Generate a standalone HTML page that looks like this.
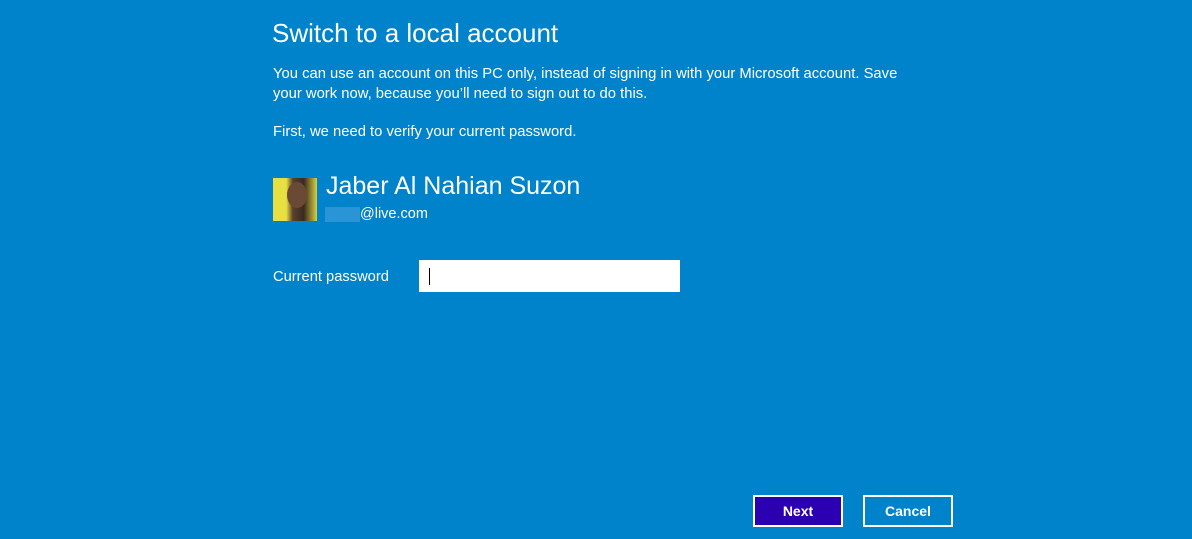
<!DOCTYPE html><html><head><style>
body{margin:0;width:1192px;height:539px;background:#0083ca;font-family:"Liberation Sans",sans-serif;color:#fff;position:relative;overflow:hidden}
.a{position:absolute;white-space:nowrap}
.btn{position:absolute;top:495px;width:86px;height:28px;border:2px solid #fff;font-weight:bold;font-size:14px;line-height:28px;text-align:center}
</style></head><body>
<div class="a" style="left:272px;top:18px;font-size:26px;">Switch to a local account</div>
<div class="a" style="left:273px;top:64px;font-size:14.8px;line-height:20px">You can use an account on this PC only, instead of signing in with your Microsoft account. Save<br>your work now, because you’ll need to sign out to do this.</div>
<div class="a" style="left:273px;top:124px;font-size:14.8px">First, we need to verify your current password.</div>
<div class="a" style="left:273px;top:178px;width:44px;height:43px;background:linear-gradient(90deg,#e8e040 0,#e8e040 30%,#5a4030 45%,#3a2a20 70%,#d8d040 100%)"><div style="position:absolute;left:14px;top:4px;width:20px;height:26px;border-radius:50%;background:#6b4a35"></div></div>
<div class="a" style="left:326px;top:172px;font-size:25px;">Jaber Al Nahian Suzon</div>
<div class="a" style="left:325px;top:207px;width:35px;height:15px;background:#2a95d6"></div>
<div class="a" style="left:360px;top:206px;font-size:14.5px">@live.com</div>
<div class="a" style="left:273px;top:269px;font-size:14.7px">Current password</div>
<div class="a" style="left:419px;top:260px;width:261px;height:32px;background:#fff"><div style="position:absolute;left:10px;top:8px;width:1px;height:17px;background:#000"></div></div>
<div class="btn" style="left:753px;background:#2b00b0">Next</div>
<div class="btn" style="left:863px">Cancel</div>
</body></html>
